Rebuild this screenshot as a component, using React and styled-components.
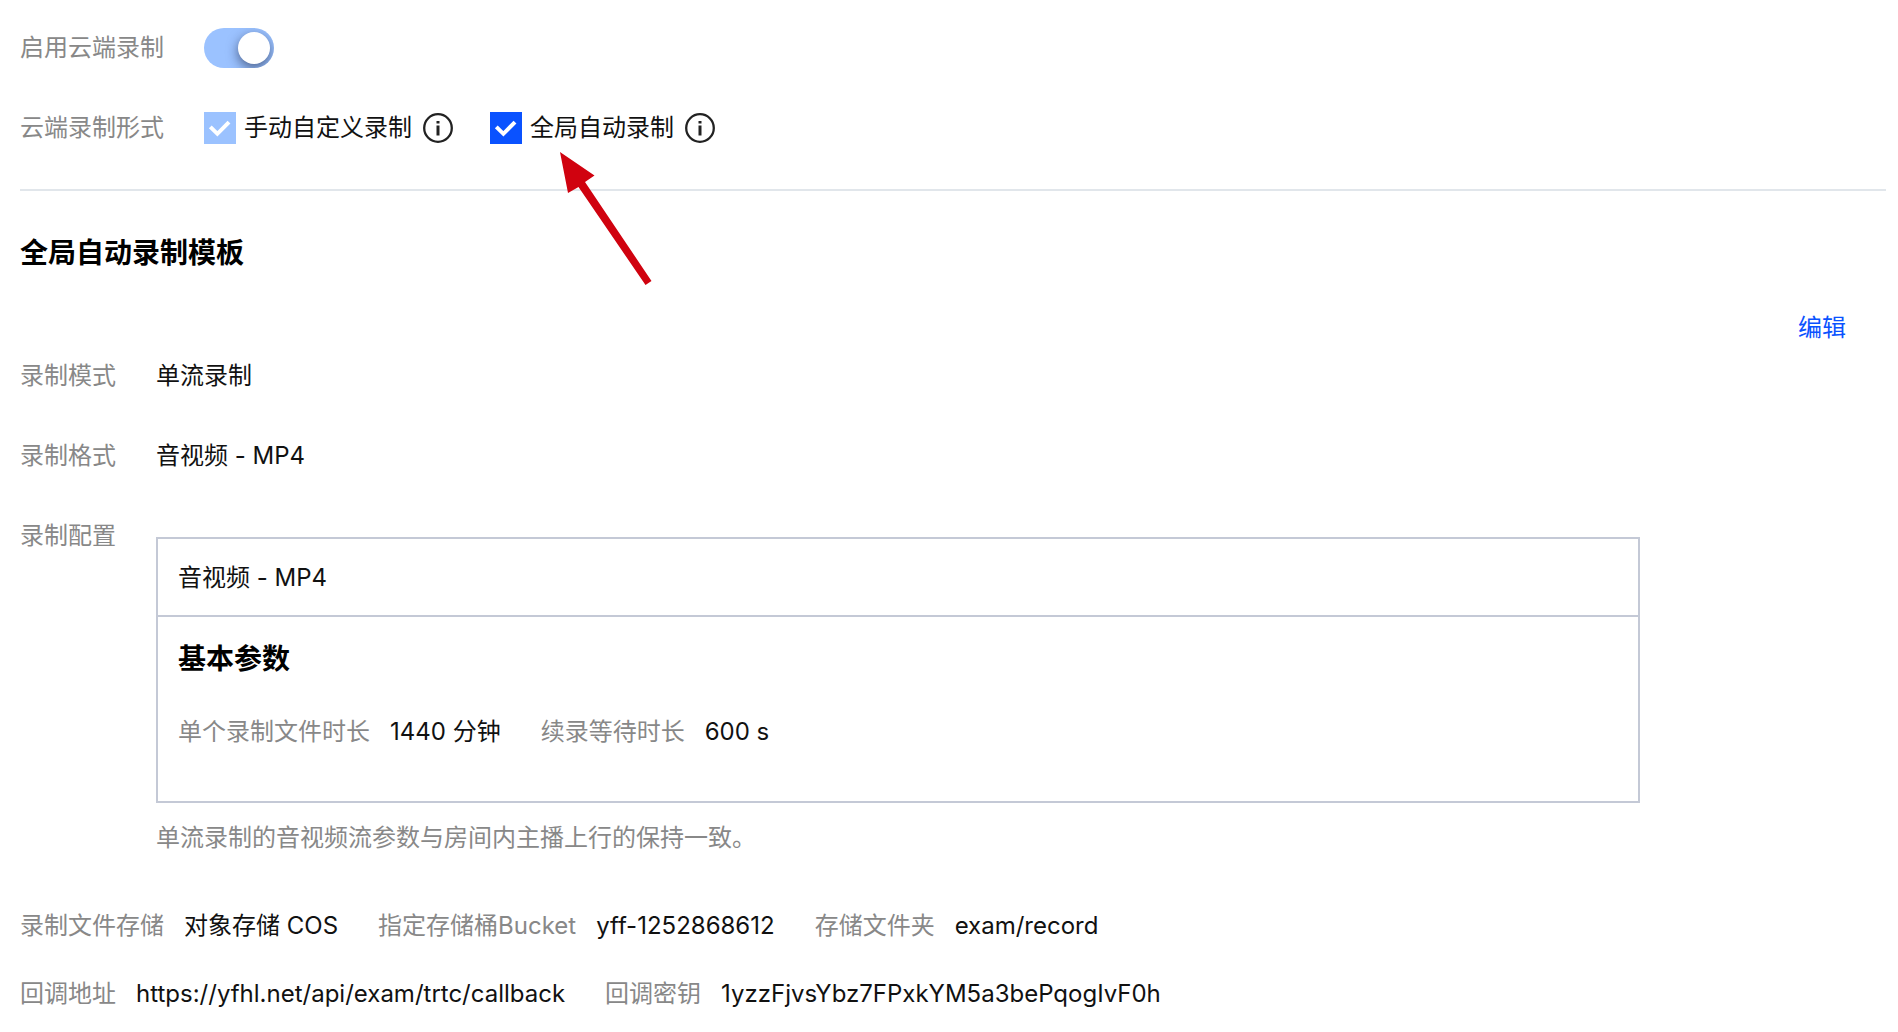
import { useState } from 'react';
import styled, { createGlobalStyle } from 'styled-components';

export default function App(){
    const [autoRecord, setAutoRecord] = useState(true);

    return(
        <Page>
            <GlobalStyle />
            <Settings>
                <SettingRow>
                    <SettingLabel htmlFor="cloud-record">启用云端录制</SettingLabel>
                    <Switch id="cloud-record" type="checkbox" role="switch" defaultChecked disabled />
                </SettingRow>
                <SettingRow as="fieldset">
                    <SettingLabel as="legend">云端录制形式</SettingLabel>
                    <Options>
                        <Option>
                            <Checkbox id="manual" checked disabled readOnly />
                            <label htmlFor="manual">手动自定义录制</label>
                            <InfoIcon />
                        </Option>
                        <Option>
                            <Checkbox id="auto" checked={autoRecord}
                            onChange={e => setAutoRecord(e.target.checked)}
                            />
                            <label htmlFor="auto">全局自动录制</label>
                            <InfoIcon />
                            <Arrow viewBox="0 0 92 133" aria-hidden="true">
                                <path d="M0 0L34.5 23.5L25 30L91.5 129L85.5 133L18.5 35L8 41Z" fill="#d0020f" />
                            </Arrow>
                        </Option>
                    </Options>
                </SettingRow>
            </Settings>
            <Divider />
            <Title>全局自动录制模板</Title>
            <Toolbar>
                <EditLink href="#edit">编辑</EditLink>
            </Toolbar>
            <Details>
                <dt>录制模式</dt>
                <dd>单流录制</dd>
                <dt>录制格式</dt>
                <dd>音视频 - MP4</dd>
                <dt>录制配置</dt>
                <dd>
                    <Panel>
                        <PanelHead>音视频 - MP4</PanelHead>
                        <PanelBody>
                            <PanelTitle>基本参数</PanelTitle>
                            <InlineList>
                                <Field label="单个录制文件时长">1440 分钟</Field>
                                <Field label="续录等待时长">600 s</Field>
                            </InlineList>
                        </PanelBody>
                    </Panel>
                    <Note>单流录制的音视频流参数与房间内主播上行的保持一致。</Note>
                </dd>
            </Details>
            <Footer>
                <InlineList>
                    <Field label="录制文件存储">对象存储 COS</Field>
                    <Field label="指定存储桶Bucket">yff-1252868612</Field>
                    <Field label="存储文件夹">exam/record</Field>
                </InlineList>
                <InlineList>
                    <Field label="回调地址">https://yfhl.net/api/exam/trtc/callback</Field>
                    <Field label="回调密钥">1yzzFjvsYbz7FPxkYM5a3bePqogIvF0h</Field>
                </InlineList>
            </Footer>
        </Page>
    );
}

function Checkbox(props){
    return(
        <CheckWrap>
            <CheckInput type="checkbox" {...props} />
            {props.checked &&
            <CheckMark viewBox="0 0 32 32" aria-hidden="true">
                <path d="M6.3 14.8L13.4 21.8L25 10.2" fill="none" stroke="#fff" strokeWidth="4" />
            </CheckMark>}
        </CheckWrap>
    );
}

function InfoIcon(){
    return(
        <InfoSvg viewBox="0 0 30 30" aria-hidden="true">
            <circle cx="15" cy="15" r="13.8" fill="none" stroke="#222" strokeWidth="2.3" />
            <path d="M13.5 8H16.5V10.6H13.5ZM13.5 12.5H16.5V22.5H13.5Z" fill="#222" />
        </InfoSvg>
    );
}

function Field({ label, children }){
    return(
        <FieldItem>
            <dt>{label}</dt>
            <dd>{children}</dd>
        </FieldItem>
    );
}

const GlobalStyle = createGlobalStyle`
    *{
        box-sizing: border-box;
    }
    body{
        margin: 0;
        background: #fff;
    }
    dl, dd, h2, h3, p{
        margin: 0;
    }
`;

const Page = styled.main`
    padding: 28px 12px 20px 20px;
    font-family: Inter, "Noto Sans CJK SC", sans-serif;
    font-size: 24px;
    line-height: 36px;
    color: #111;
    dt{
        color: #888;
    }
`;

const Settings = styled.form`
    display: flex;
    flex-direction: column;
    gap: 42px;
    padding-bottom: 43px;
`;

const SettingRow = styled.div`
    display: flex;
    align-items: center;
    margin: 0;
    padding: 0;
    border: 0;
`;

const SettingLabel = styled.label`
    float: left;
    width: 184px;
    padding: 0;
    color: #888;
`;

const Switch = styled.input`
    appearance: none;
    width: 70px;
    height: 40px;
    margin: 0;
    padding: 4px;
    display: flex;
    justify-content: flex-end;
    border-radius: 20px;
    background: #9bc2ff;
    overflow: hidden;
    &::before{
        content: "";
        width: 32px;
        height: 32px;
        border-radius: 50%;
        background: #fff;
        box-shadow: 0 4px 12px rgba(20, 30, 60, 0.6);
    }
`;

const Options = styled.div`
    display: flex;
    gap: 37px;
`;

const Option = styled.div`
    position: relative;
    display: flex;
    align-items: center;
    label{
        margin: 0 11px 0 8px;
    }
`;

const CheckWrap = styled.span`
    display: grid;
    width: 32px;
    height: 32px;
`;

const CheckInput = styled.input`
    appearance: none;
    grid-area: 1 / 1;
    margin: 0;
    border: 2px solid #c4c9d6;
    &:checked{
        border: 0;
        background: #0a52ff;
    }
    &:checked:disabled{
        background: #9bc2ff;
    }
`;

const CheckMark = styled.svg`
    grid-area: 1 / 1;
    pointer-events: none;
`;

const InfoSvg = styled.svg`
    width: 30px;
    height: 30px;
`;

const Arrow = styled.svg`
    position: absolute;
    left: 70px;
    top: 42px;
    width: 92px;
    height: 133px;
    pointer-events: none;
`;

const Divider = styled.hr`
    height: 2px;
    margin: 0;
    border: 0;
    background: #e1e6eb;
`;

const Title = styled.h2`
    margin-top: 41px;
    font-size: 28px;
    line-height: 42px;
    color: #000;
`;

const Toolbar = styled.div`
    display: flex;
    justify-content: flex-end;
    padding: 36px 40px 0 0;
`;

const EditLink = styled.a`
    color: #0a52ff;
    text-decoration: none;
`;

const Details = styled.dl`
    display: grid;
    grid-template-columns: 136px 1fr;
    row-gap: 44px;
    margin-top: 12px;
`;

const Panel = styled.section`
    margin: 19px 246px 0 0;
    border: 2px solid #c4c9d6;
`;

const PanelHead = styled.div`
    padding: 21px 20px 19px;
    border-bottom: 2px solid #c4c9d6;
`;

const PanelBody = styled.div`
    padding: 21px 20px 51px;
`;

const PanelTitle = styled.h3`
    margin-bottom: 34px;
    font-size: 28px;
    line-height: 42px;
    color: #000;
`;

const Note = styled.p`
    margin-top: 17px;
    color: #888;
`;

const InlineList = styled.dl`
    display: flex;
    flex-wrap: wrap;
    gap: 0 40px;
`;

const FieldItem = styled.div`
    display: flex;
    gap: 20px;
`;

const Footer = styled.footer`
    display: flex;
    flex-direction: column;
    gap: 32px;
    margin-top: 52px;
`;
